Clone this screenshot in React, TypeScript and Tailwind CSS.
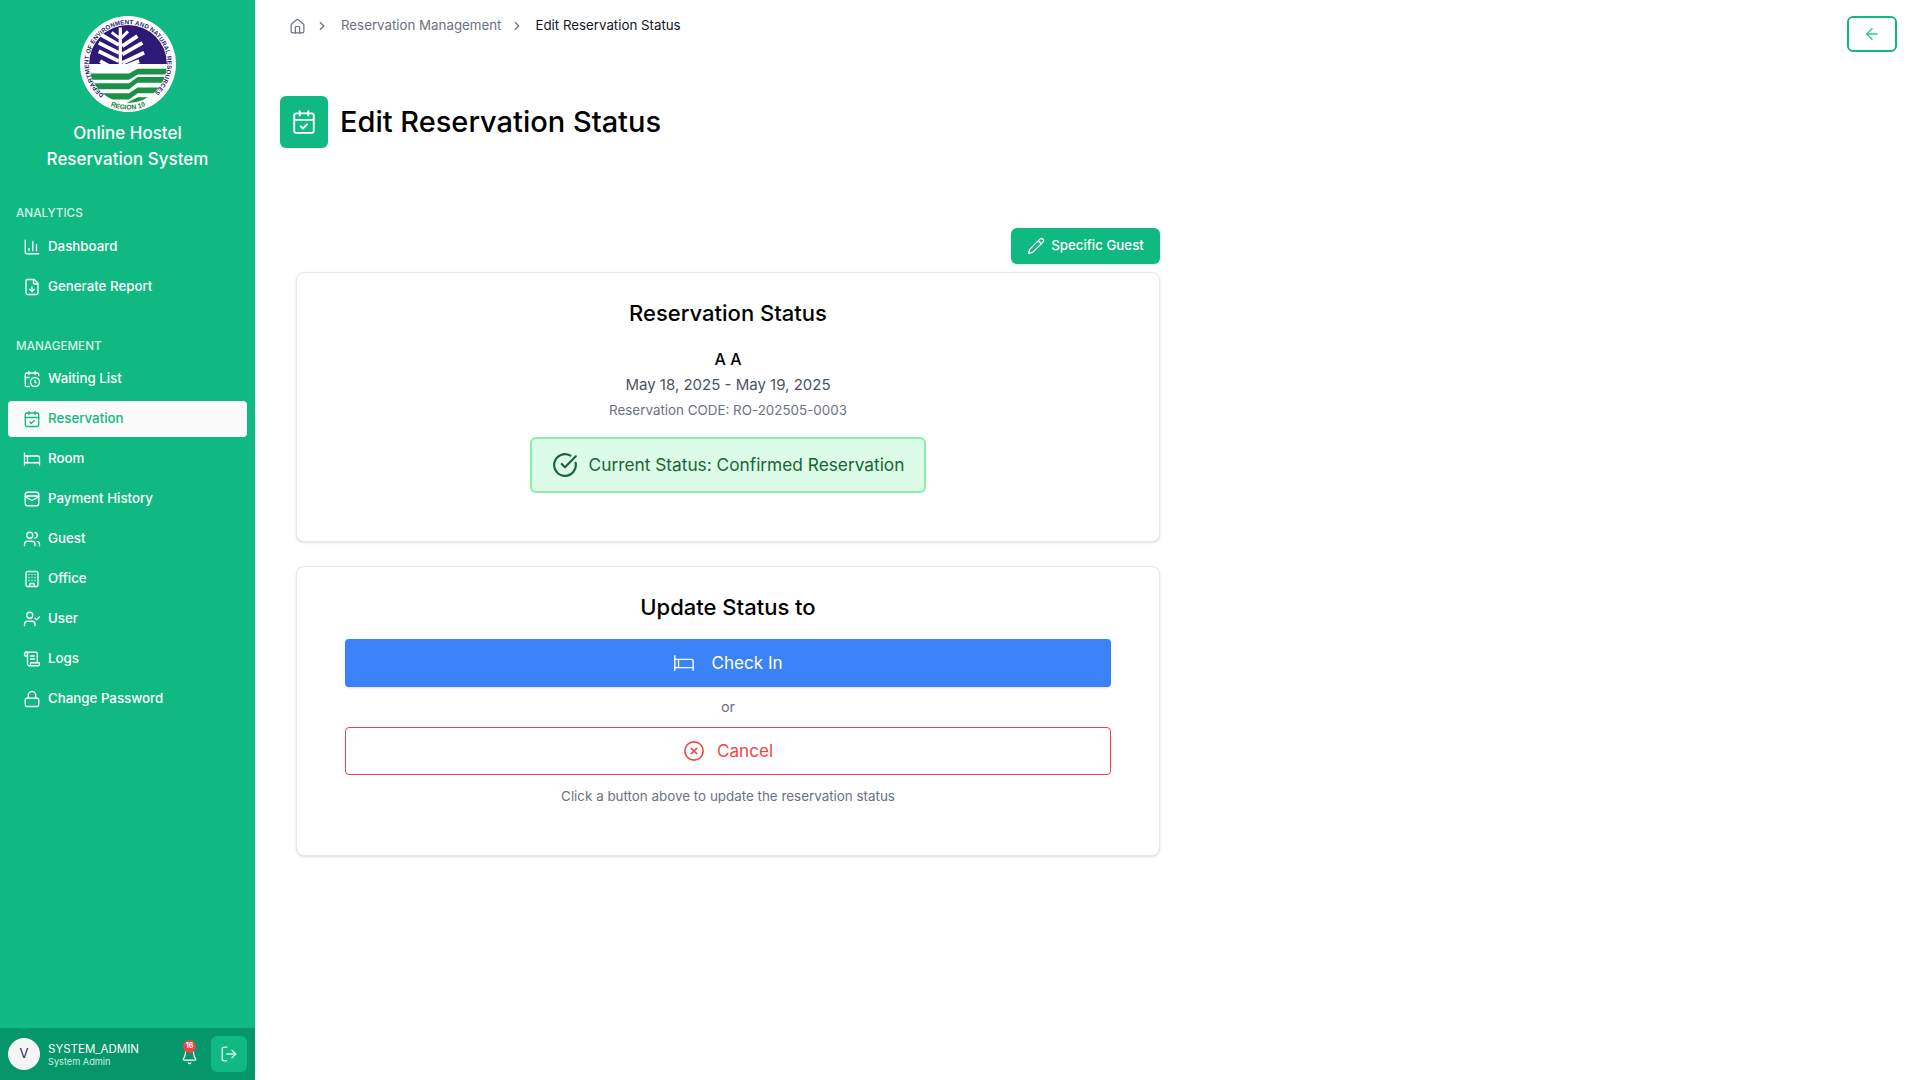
import React from "react";
import {
  ChartColumn, FileDown, CalendarClock, CalendarCheck, Bed, Users, Building, UserCheck, ScrollText, Lock,
  Bell, LogOut, House, ChevronRight, Pencil, CircleCheckBig, CircleX, ArrowLeft,
} from "lucide-react";

const font = { fontFamily: '"Inter", "Liberation Sans", sans-serif' };

function PaymentIcon(props: { className?: string }) {
  return (
    <svg viewBox="0 0 24 24" fill="none" stroke="currentColor" strokeWidth="2" strokeLinecap="round" strokeLinejoin="round" className={props.className}>
      <rect x="3" y="3" width="18" height="18" rx="3" />
      <path d="M3 8h18" />
      <path d="M3 9l9 5 9-5" />
    </svg>
  );
}

function Logo() {
  return (
    <svg viewBox="0 0 100 100" className="w-[96px] h-[96px]">
      <defs>
        <path id="arcTop" d="M 25 82 A 41 41 0 1 1 75 82" />
        <path id="arcBottom" d="M 28 92 A 47 47 0 0 0 72 92" />
        <clipPath id="inner"><circle cx="50" cy="50" r="40.5" /></clipPath>
      </defs>
      <circle cx="50" cy="50" r="50" fill="#ffffff" />
      <g clipPath="url(#inner)">
        <rect x="0" y="0" width="100" height="50" fill="#2c1a76" />
        <g fill="#1a9146">
          <path d="M0 60 H51 L60 55 H100 V61 H60 L51 66.5 H0 Z" />
          <path d="M0 70 H51 L60 63.5 H100 V69.5 H60 L51 76.3 H0 Z" />
          <path d="M0 80.5 H51 L60 74.5 H100 V80.5 H60 L51 87 H0 Z" />
          <path d="M46 92 L60 84.7 H100 V92 Z" />
        </g>
      </g>
      <g stroke="#ffffff" fill="none" strokeWidth="4">
        <path d="M42 56 V 12" strokeWidth="3.4" />
        <path d="M41 23 L 33 17 M43 23 L 50 16" strokeWidth="3" />
        <path d="M40.5 30 L 21 19 M44 31.4 L 59.8 21" />
        <path d="M40.5 38.4 L 19.5 28 M44 40 L 65 28" />
        <path d="M40.5 47 L 19.5 36.7 M44 49 L 66.8 38.4" />
        <path d="M37 56 L 21 47 M44 54 L 61.6 47" />
      </g>
      <text fontSize="6.4" fontWeight="700" fill="#2c1a76" fontFamily="Liberation Sans, sans-serif">
        <textPath href="#arcTop" textLength="200" lengthAdjust="spacing">DEPARTMENT OF ENVIRONMENT AND NATURAL RESOURCES</textPath>
      </text>
      <text fontSize="7" fontWeight="700" fill="#1a7a3d" fontFamily="Liberation Sans, sans-serif" textAnchor="middle">
        <textPath href="#arcBottom" startOffset="50%">REGION 10</textPath>
      </text>
    </svg>
  );
}

type Item = { label: string; icon: React.ComponentType<{ className?: string }>; active?: boolean };

function NavItem({ item }: { item: Item }) {
  const Icon = item.icon;
  return (
    <div className={`flex items-center h-9 mx-2 pl-[15px] gap-[7px] rounded text-[13.3px] font-medium ${item.active ? "bg-[#fbfbfb] text-[#10b981]" : "text-white"}`}>
      <Icon className="w-[18px] h-[18px] shrink-0 stroke-[1.75]" />
      <span>{item.label}</span>
    </div>
  );
}

function Section({ title, items, className, labelClass }: { title: string; items: Item[]; className?: string; labelClass?: string }) {
  return (
    <div className={className}>
      <div className={`pl-4 text-[11.7px] font-medium leading-4 text-[#d6f0e4] ${labelClass}`}>{title}</div>
      <div className="flex flex-col gap-1">
        {items.map((it) => (
          <NavItem key={it.label} item={it} />
        ))}
      </div>
    </div>
  );
}

function Sidebar() {
  return (
    <aside className="w-[255px] shrink-0 h-[1080px] bg-[#10b981] flex flex-col">
      <div className="flex flex-col items-center pt-4">
        <Logo />
        <div className="mt-2 text-center text-white text-[17px] leading-[26px] font-medium">
          Online Hostel
          <br />
          Reservation System
        </div>
      </div>
      <Section
        className="mt-[33px]"
        labelClass="mb-2"
        title="ANALYTICS"
        items={[
          { label: "Dashboard", icon: ChartColumn },
          { label: "Generate Report", icon: FileDown },
        ]}
      />
      <Section
        className="mt-[33px]"
        labelClass="mb-[7px]"
        title="MANAGEMENT"
        items={[
          { label: "Waiting List", icon: CalendarClock },
          { label: "Reservation", icon: CalendarCheck, active: true },
          { label: "Room", icon: Bed },
          { label: "Payment History", icon: PaymentIcon },
          { label: "Guest", icon: Users },
          { label: "Office", icon: Building },
          { label: "User", icon: UserCheck },
          { label: "Logs", icon: ScrollText },
          { label: "Change Password", icon: Lock },
        ]}
      />
      <div className="mt-auto h-[52px] bg-[#059669] flex items-center pl-2 pr-2">
        <div className="w-8 h-8 rounded-full bg-[#f5f5f5] text-[#1f2a5a] flex items-center justify-center text-[13px]">V</div>
        <div className="ml-2 flex-1 leading-none pt-[2px]">
          <div className="text-white text-[11.5px] leading-[14px]">SYSTEM_ADMIN</div>
          <div className="text-[#d1f0e2] text-[9.2px] leading-[12px]">System Admin</div>
        </div>
        <div className="relative mr-[13px]">
          <Bell className="w-[17px] h-[17px] mt-1 text-white stroke-[1.75]" />
          <span className="absolute -top-[4px] left-[2px] w-[13px] h-[13px] rounded-full bg-[#ef4444] text-white text-[7px] font-bold flex items-center justify-center">16</span>
        </div>
        <div className="w-9 h-9 rounded-md bg-[#10b981] flex items-center justify-center">
          <LogOut className="w-[18px] h-[18px] text-[#d1f0e2] stroke-2" />
        </div>
      </div>
    </aside>
  );
}

function Main() {
  return (
    <main className="flex-1 min-w-0 flex flex-col">
      <div className="flex items-start justify-between pt-4 pr-6 pl-[34px] h-[96px]">
        <nav className="flex items-center text-[13.3px] h-[18px] mt-[1px]">
          <House className="w-[17px] h-[17px] text-[#6b7280] stroke-[1.75]" />
          <ChevronRight className="w-[14px] h-[14px] ml-[9px] text-[#6b7280]" />
          <span className="ml-[12px] text-[#6b7280]">Reservation Management</span>
          <ChevronRight className="w-[14px] h-[14px] ml-[9px] text-[#6b7280]" />
          <span className="ml-[11px] text-[#111827]">Edit Reservation Status</span>
        </nav>
        <button className="w-[50px] h-9 rounded-md border-2 border-[#10b981] flex items-center justify-center">
          <ArrowLeft className="w-[18px] h-[18px] text-[#34c794]" />
        </button>
      </div>
      <div className="flex items-center pl-[25px] gap-3">
        <div className="w-12 h-[52px] rounded-md bg-[#10b981] flex items-center justify-center">
          <CalendarCheck className="w-[26px] h-[26px] text-white stroke-[1.75]" />
        </div>
        <h1 className="text-[29px] font-medium text-black leading-[36px]">Edit Reservation Status</h1>
      </div>
      <div className="w-[864px] ml-[41px] mt-[80px]">
        <div className="flex justify-end">
          <button className="h-9 w-[149px] rounded-md bg-[#10b981] text-white text-[13.3px] font-medium flex items-center justify-center gap-[6px] shadow-sm">
            <Pencil className="w-[18px] h-[18px] stroke-[1.75]" />
            Specific Guest
          </button>
        </div>
        <section className="mt-2 h-[270px] rounded-lg border border-[#e5e7eb] shadow-sm bg-white flex flex-col items-center pt-[24px]">
          <h2 className="text-[22px] font-medium leading-[32px] text-black">Reservation Status</h2>
          <div className="mt-[18px] text-[16px] font-medium leading-[24px] text-black">A A</div>
          <div className="mt-[2px] text-[15px] leading-[24px] text-[#4b5563]">May 18, 2025 - May 19, 2025</div>
          <div className="mt-[3px] text-[13.4px] leading-[20px] text-[#6b7280]">Reservation CODE: RO-202505-0003</div>
          <div className="mt-[17px] w-[396px] h-[56px] rounded-md border-2 border-[#86efac] bg-[#dcfce7] text-[#166534] flex items-center justify-center gap-[11px] text-[17.3px]">
            <CircleCheckBig className="w-[26px] h-[26px] stroke-2" />
            Current Status: Confirmed Reservation
          </div>
        </section>
        <section className="mt-6 h-[290px] rounded-lg border border-[#e5e7eb] shadow-sm bg-white flex flex-col items-center pt-[24px] px-12">
          <h2 className="text-[22px] font-medium leading-[32px] text-black">Update Status to</h2>
          <button className="mt-4 w-full h-12 rounded bg-[#3b82f6] text-white text-[17.1px] flex items-center justify-center gap-4 shadow-sm">
            <Bed className="w-[22px] h-[22px] stroke-[1.5]" />
            Check In
          </button>
          <div className="mt-[8px] h-6 text-[14.5px] leading-6 text-[#6b7280]">or</div>
          <button className="mt-[8px] w-full h-12 rounded border border-[#ef4444] text-[#ef4444] text-[17.1px] flex items-center justify-center gap-[12px]">
            <CircleX className="w-[22px] h-[22px] stroke-[1.75]" />
            Cancel
          </button>
          <div className="mt-[11px] text-[13.4px] leading-5 text-[#6b7280]">Click a button above to update the reservation status</div>
        </section>
      </div>
    </main>
  );
}

export default function App() {
  return (
    <div className="flex w-[1921px] h-[1080px] bg-white overflow-hidden" style={font}>
      <Sidebar />
      <Main />
    </div>
  );
}
